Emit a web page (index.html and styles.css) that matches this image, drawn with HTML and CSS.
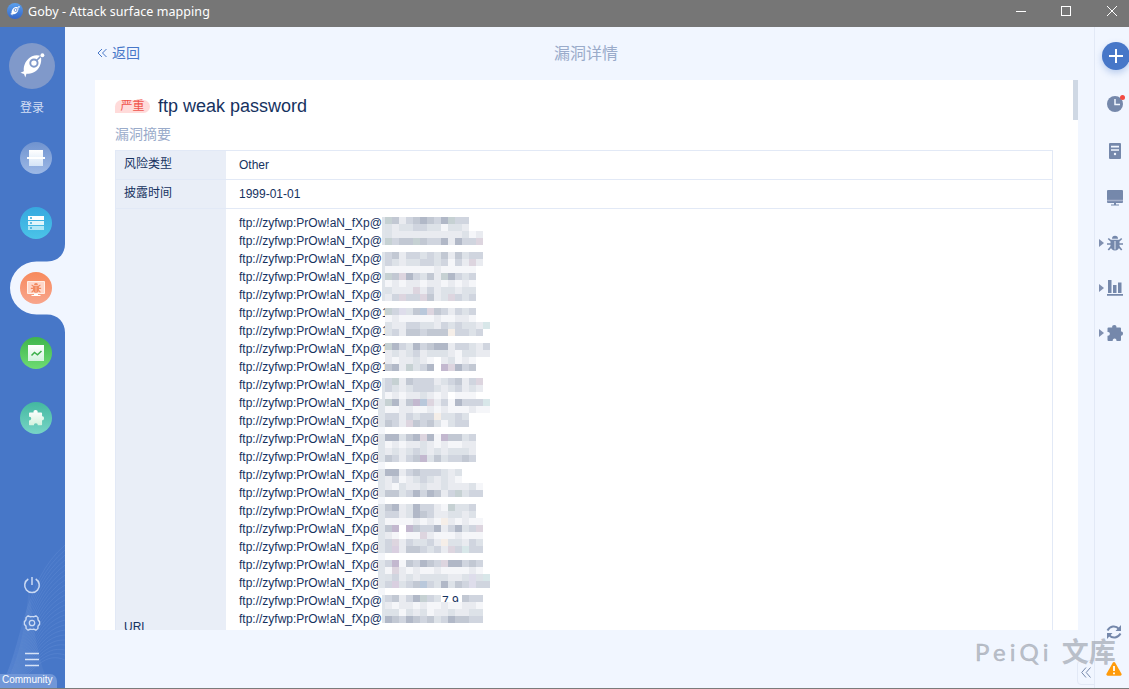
FILE: index.html
```html
<!DOCTYPE html>
<html lang="zh-CN">
<head>
<meta charset="utf-8">
<title>Goby - Attack surface mapping</title>
<link rel="stylesheet" href="styles.css">
</head>
<body>
<svg width="0" height="0" class="defs" aria-hidden="true">
  <defs>
    <linearGradient id="g-gray" x2="0" y2="1"><stop stop-color="#7093cf"/><stop offset="1" stop-color="#9db9e6"/></linearGradient>
    <linearGradient id="g-cyan" x2="0" y2="1"><stop stop-color="#37a8df"/><stop offset="1" stop-color="#4bc4e8"/></linearGradient>
    <linearGradient id="g-orange" x2="0" y2="1"><stop stop-color="#f78a5d"/><stop offset="1" stop-color="#f8a58c"/></linearGradient>
    <linearGradient id="g-green" x2="0" y2="1"><stop stop-color="#3fb54c"/><stop offset="1" stop-color="#6edc73"/></linearGradient>
    <linearGradient id="g-teal" x2="0" y2="1"><stop stop-color="#43b8a0"/><stop offset="1" stop-color="#78d5c6"/></linearGradient>
    <linearGradient id="g-sheet" x2="0" y2="1"><stop stop-color="#fff"/><stop offset="1" stop-color="#d4e4f7"/></linearGradient>
    <linearGradient id="g-mint" x2="0" y2="1"><stop stop-color="#fff"/><stop offset="1" stop-color="#d2f2dd"/></linearGradient>
    <linearGradient id="g-logo" x2="0" y2="1"><stop stop-color="#5ba0ec"/><stop offset="1" stop-color="#3466c9"/></linearGradient>
    <symbol id="rocket" viewBox="0 0 26 26">
      <path d="M.5 20.500l3.500-1.500c-.8-6 2.500-12.500 8.500-15.500 3.500-1.600 6.500-1.500 9-.3 1 3.500.8 7-1 10.500-3 6-8.500 8-13.800 8l-1.200 3.800-1.300-3.600z" fill="#fff"/>
      <circle cx="14.500" cy="10.500" r="3.800" fill="none" stroke="var(--ring)" stroke-width="2"/>
      <path d="M17 8l4.500-4.500" stroke="var(--ring)" stroke-width="1.600"/>
      <circle cx="23.300" cy="2.300" r="2" fill="#fff"/>
    </symbol>
    <symbol id="puzzle" viewBox="0 0 16 16">
      <path d="M1.500 2.500h3.700C4.900.7 6 0 7.300 0s2.500.8 2.100 2.500H13a1 1 0 0 1 1 1v3c1.300-.3 2 .7 2 2s-.8 2.400-2 2.100V15a1 1 0 0 1-1 1H9.500c.2-1.500-.6-2.400-1.900-2.400S5.500 14.500 5.700 16H1.500a1 1 0 0 1-1-1v-4.300c1.500.2 2.300-.6 2.300-1.900S2 6.700.5 7V3.500a1 1 0 0 1 1-1z"/>
    </symbol>
    <symbol id="bug" viewBox="0 0 16 16">
      <path d="M5 3.700a3 3 0 0 1 6 0z" fill="currentColor"/>
      <path d="M3.500 4.800h9v6.200a4.500 4.600 0 0 1-9 0z" fill="currentColor"/>
      <path d="M4 6L1.300 3.500M12 6l2.700-2.500M4 9H0M12 9h4M4.300 11.500L1.300 15M11.700 11.500l3 3.500" fill="none" stroke="currentColor" stroke-width="1.700"/>
      <path d="M8 6v8.500" stroke="var(--line)" stroke-width=".9"/>
    </symbol>
  </defs>
</svg>

<div class="window">
  <header class="titlebar">
    <svg class="app-logo" width="16" height="16"><circle cx="8" cy="8" r="8" fill="url(#g-logo)"/><use href="#rocket" x="3" y="3" width="10" height="10"/></svg>
    <span class="app-name">Goby - Attack surface mapping</span>
    <svg class="window-buttons" width="104" height="12" fill="none" stroke="#fff">
      <path d="M1 6.500h10" /><rect x="46.500" y="1.500" width="9" height="9"/><path d="M92 1l10 10M102 1L92 11"/>
    </svg>
  </header>

  <div class="main">
    <nav class="sidebar">
      <svg class="sidebar-shape" width="65" height="661">
        <path fill="#4777c8" d="M0 0h65v217c0 10-7 17.500-18 17.500H36.500a26.500 26.500 0 0 0 0 53H47c11 0 18 8 18 18V661H0z"/>
        <g id="waves" fill="none" stroke="#8fb2ea" stroke-opacity=".22" stroke-width=".7"></g>
        <path d="M4 661C20 630 25 600 29 560c4 40 10 80 22 101z" fill="#fff" fill-opacity=".04"/>
      </svg>
      <div class="account">
        <svg width="46" height="46"><circle cx="23" cy="23" r="23" fill="#8099ca"/><use href="#rocket" x="11" y="10" width="25" height="25"/></svg>
        <span class="login">登录</span>
      </div>
      <div class="menu">
        <svg width="32" height="32"><circle cx="16" cy="16" r="16" fill="url(#g-gray)"/><path d="M9 8h14v16H9z" fill="url(#g-sheet)"/><path d="M7 15h18v2H7z" fill="#fff"/></svg>
        <svg width="32" height="32"><circle cx="16" cy="16" r="16" fill="url(#g-cyan)"/><path d="M8 9h16v4H8z" fill="#fff"/><path d="M8 14h16v4H8z" fill="#e0f5fb"/><path d="M8 19h16v4H8z" fill="#b0e7f7"/><path d="M10 11h2M10 16h2M10 21h2" stroke="#38a9d8" stroke-width="1.500"/></svg>
        <svg width="32" height="32" class="bug-on"><circle cx="16" cy="16" r="16" fill="url(#g-orange)"/><path d="M7.500 9.500h17v12h-17z" fill="#ffd7c9" stroke="#fff0e8"/><path d="M14 22h4v1h2.500v1h-9v-1H14z" fill="#fff"/><use href="#bug" x="10.500" y="10.500" width="11" height="10.500"/></svg>
        <svg width="32" height="32"><circle cx="16" cy="16" r="16" fill="url(#g-green)"/><path d="M8 8h16v16H8z" fill="url(#g-mint)"/><path d="M11.500 18.500l3-3 3 2.300 4-3.800" fill="none" stroke="#3caf4a" stroke-width="1.500"/></svg>
        <svg width="32" height="32"><circle cx="16" cy="16" r="16" fill="url(#g-teal)"/><use href="#puzzle" x="8.500" y="8" width="15.500" height="15.500" fill="url(#g-mint)"/></svg>
      </div>
      <div class="tools">
        <svg width="18" height="18" fill="none" stroke="#cbdaf3" stroke-width="1.500"><path d="M5.300 3A7.300 7.300 0 1 0 12.700 3M9 1v8"/></svg>
        <svg width="18" height="18" fill="none" stroke="#cbdaf3" stroke-width="1.300"><path d="M5 1.800c1.500 1.300 2.300 1.300 4 .7 1.700.6 2.500.6 4-.7l2 1.800c-.6 2-.3 2.700 1.600 4v2.800c-1.900 1.300-2.200 2-1.600 4l-2 1.800c-1.500-1.300-2.300-1.300-4-.7-1.700-.6-2.500-.6-4 .7l-2-1.800c.6-2 .3-2.700-1.600-4V7.600c1.900-1.300 2.200-2 1.600-4z"/><circle cx="9" cy="9" r="2.700"/></svg>
        <svg width="18" height="18" stroke="#d6e2f6" stroke-width="1.300"><path d="M2 1.500h14M2 7.500h14M2 13.500h14"/></svg>
      </div>
      <span class="edition">Community</span>
    </nav>

    <main class="content">
      <div class="page-head">
        <a class="back"><svg width="10" height="10" fill="none" stroke="#4777c8"><path d="M5 1L1 5l4 4M9.500 1l-4 4 4 4"/></svg>返回</a>
        <h1 class="page-title">漏洞详情</h1>
      </div>
      <section class="card">
        <div class="scroll-thumb"></div>
        <div class="vuln-head"><span class="level">严重</span><h2 class="vuln-name">ftp weak password</h2></div>
        <h3 class="section-name">漏洞摘要</h3>
        <div class="details">
          <div class="key">风险类型</div><div class="value">Other</div>
          <div class="key">披露时间</div><div class="value">1999-01-01</div>
          <div class="key key-url">URL</div><div class="value value-urls" id="urls"></div>
        </div>
        <svg class="mosaic" id="mosaic" width="115" height="413"></svg>
      </section>
    </main>

    <aside class="rail">
      <button class="add"><svg width="14" height="14" stroke="#fff" stroke-width="2"><path d="M7 0v14M0 7h14"/></svg></button>
      <div class="rail-icons">
        <svg width="20" height="18"><circle cx="9" cy="10" r="8" fill="#7588ab"/><path d="M9 5v5.500h5" fill="none" stroke="#f1f6ff" stroke-width="1.500"/><circle cx="16.500" cy="3.500" r="2.500" fill="#f24a42"/></svg>
        <svg width="20" height="18"><rect x="3" y="1" width="12" height="16" rx="1" fill="#7588ab"/><path d="M5 4.700h8M5 8h8" stroke="#f1f6ff" stroke-width="1.700"/><circle cx="9" cy="12" r="1.200" fill="#f1f6ff"/></svg>
        <svg width="20" height="18" fill="#7588ab"><rect x="1" y="1" width="16" height="13" rx="1"/><path d="M1 11.500h16" stroke="#a8b3cc" stroke-width="1.500"/><path d="M8 14h2v1.500h3v1H5v-1h3z"/></svg>
        <svg width="20" height="18" class="bug-off"><use href="#bug" x="1" y="1" width="16" height="16"/></svg>
        <svg width="20" height="18" fill="#7588ab"><path d="M2 1h3.500v13H2zM7 6h3.500v8H7zM12 3.500h3.500V14H12zM1 15h16v1.700H1z"/></svg>
        <svg width="20" height="18" fill="#7588ab"><use href="#puzzle" x="1" y="1" width="16" height="16"/></svg>
      </div>
      <svg class="arrows" width="5" height="98" fill="#8090b0"><path d="M0 0l5 4-5 4zM0 45l5 4-5 4zM0 90l5 4-5 4z"/></svg>
      <div class="rail-foot">
        <svg width="16" height="16" fill="none" stroke="#7588ab" stroke-width="2"><path d="M1.500 6.500C4 2 9.500 1 13 5M14.500 9.500C12 14 6.500 15 3 11"/><path d="M15 1v6H9.500zM1 15V9h5.500z" fill="#7588ab" stroke="none"/></svg>
        <svg width="16" height="14"><path d="M6.800.8a1.400 1.400 0 0 1 2.400 0l6.300 11a1.400 1.400 0 0 1-1.200 2H1.700a1.400 1.400 0 0 1-1.200-2z" fill="#ff9b0a"/><path d="M8 4v5M8 10.500v1.700" stroke="#fff" stroke-width="1.800"/></svg>
      </div>
      <div class="collapse"><svg width="10" height="11" fill="none" stroke="#7588ab"><path d="M5 .5l-4.300 5 4.300 5M9.500.5l-4.300 5 4.300 5"/></svg></div>
    </aside>
  </div>
  <div class="watermark"><span class="mark-latin">PeiQi</span><span class="mark-cjk">文库</span></div>
</div>
<script src="script.js"></script>
</body>
</html>
```
FILE: styles.css
```css
* { box-sizing: border-box; }
body { margin: 0; overflow: hidden; font-family: "Liberation Sans", "Noto Sans CJK SC", sans-serif; color: #16325f; }
svg { display: block; flex: none; }
h1, h2, h3 { margin: 0; font-weight: 400; }
.defs { position: absolute; }
.window { position: relative; width: 1129px; height: 689px; display: flex; flex-direction: column; background: #f1f6ff; border-bottom: 1px solid #7b7b7b; overflow: hidden; }

.titlebar { height: 27px; flex: none; display: flex; align-items: center; padding: 0 10px 5px 7px; background: #767676; color: #fff; }
.app-logo { --ring: #4777c8; }
.app-name { margin-left: 5px; font: 12.5px/20px "Noto Sans", sans-serif; letter-spacing: .06px; padding-top: 2px; white-space: nowrap; }
.window-buttons { margin-left: auto; }

.main { flex: 1; min-height: 0; display: flex; }
.sidebar { position: relative; width: 65px; flex: none; display: flex; flex-direction: column; }
.sidebar-shape { position: absolute; left: 0; top: 0; }
.account { position: relative; padding: 16px 0 0 9px; height: 115px; --ring: #8099ca; }
.login { display: block; width: 46px; margin-top: 9px; font-size: 12px; line-height: 20px; text-align: center; color: #d3dff4; }
.menu { position: relative; display: flex; flex-direction: column; gap: 33px; padding-left: 20px; }
.bug-on { color: #f2895f; --line: #ffd7c9; }
.bug-off { color: #7588ab; --line: #f1f6ff; }
.tools { position: relative; display: flex; flex-direction: column; gap: 20px; margin-top: 142px; padding-left: 23px; }
.edition { position: absolute; left: 0; bottom: 0; width: 57px; height: 14px; padding-left: 2px; border-radius: 0 7px 0 0; background: #7197d8; color: #fff; font-size: 10px; line-height: 12px; }

.content { flex: 1; padding: 0 16px 0 30px; }
.page-head { position: relative; height: 53px; display: flex; align-items: center; justify-content: center; padding-right: 1px; }
.back { position: absolute; left: 2px; top: 16px; display: flex; align-items: center; gap: 5px; font-size: 14px; line-height: 20px; color: #4777c8; }
.page-title { font-size: 16px; line-height: 24px; color: #9aabca; }
.card { position: relative; height: 550px; padding: 14px 25px 0 20px; background: #fff; overflow: hidden; }
.scroll-thumb { position: absolute; right: 0; top: 0; width: 5px; height: 40px; background: #cfd8e4; }
.vuln-head { display: flex; align-items: center; gap: 8px; height: 24px; }
.level { width: 35px; height: 13px; margin-top: 1px; border-radius: 7px 7px 7px 0; background: #ffdbda; color: #f0544c; font-size: 12px; line-height: 12px; text-align: center; }
.vuln-name { font-size: 18px; line-height: 24px; }
.section-name { margin-top: 6px; height: 26px; font-size: 14px; line-height: 20px; color: #9aabca; }
.details { display: grid; grid-template-columns: 110px 1fr; grid-template-rows: 29px 29px 837px; border: 1px solid #e2e9f6; font-size: 12px; }
.key { padding-left: 8px; background: #e9eef7; line-height: 26px; border-bottom: 1px solid #e2e9f6; }
.value { padding-left: 13px; line-height: 28px; border-bottom: 1px solid #e2e9f6; }
.key-url { display: flex; align-items: center; }
.value-urls { padding-top: 5px; line-height: 18px; }
.mosaic { position: absolute; left: 282px; top: 137px; }

.rail { position: relative; width: 35px; flex: none; border-left: 1px solid #e2e9f6; }
.add { display: flex; align-items: center; justify-content: center; width: 28px; height: 28px; margin: 15px 0 0 7px; padding: 0; border: 0; border-radius: 50%; background: #4777c8; box-shadow: 0 3px 7px #4777c855; }
.rail-icons { display: flex; flex-direction: column; padding: 24px 0 0 11px; gap: 27px; }
.rail-icons svg:nth-child(1) { margin-bottom: 3px; }
.rail-icons svg:nth-child(2) { margin-bottom: 2px; }
.arrows { position: absolute; left: 4px; top: 212px; }
.rail-foot { position: absolute; left: 11px; bottom: 12px; display: flex; flex-direction: column; gap: 22px; }
.collapse { position: absolute; right: 34px; bottom: 3px; width: 18px; height: 25px; display: flex; align-items: center; justify-content: center; border: 1px solid #e2e9f6; border-radius: 4px 0 0 4px; }
.watermark { position: absolute; left: 975px; top: 632px; display: flex; align-items: center; gap: 9px; color: #9da3aeaa; line-height: 36px; white-space: nowrap; }
.mark-latin { font: 24px/36px Lato, sans-serif; letter-spacing: 4.200px; padding-top: 2px; -webkit-text-stroke: .5px; }
.mark-cjk { font: 700 27px/36px "Noto Sans CJK SC", sans-serif; }
```
FILE: script.js
```js
const NS = 'http://www.w3.org/2000/svg';
function add(parent, tag, attrs) {
  const el = document.createElementNS(NS, tag);
  for (const k in attrs) el.setAttribute(k, attrs[k]);
  parent.appendChild(el);
  return el;
}

// URL list; the host part lies under the mosaic
const tails = { 5: '1', 6: '1', 7: '1', 8: '1', 22: '2' };
const urls = document.getElementById('urls');
for (let i = 0; i < 23; i++) {
  const line = document.createElement('div');
  line.textContent = 'ftp://zyfwp:PrOw!aN_fXp@' + (tails[i] || '');
  urls.appendChild(line);
}

// Mosaic rows of 7px cells, one tone per character
const tones = { 1: '#f5f6f9', 2: '#e9ebf0', 3: '#dde2e8', 4: '#d0d5df', 5: '#c2c8d3', 6: '#b1b8c7',
  g: '#c6d1d3', p: '#ddd5df', P: '#d9cfe0', v: '#c3b8cf', b: '#b9c8db', o: '#f5eee8', t: '#d8e7e9', L: '#deddeb' };
const rows = ['g52456546g44', '323344331332', '32222222222312', 'g455g54462644p', '',
  '45244343525344', '432334434142p2', '1111111211111', 'g5p64352g6434', '1212212212121', '3222p24233233', '24p44p523p434', '',
  'g4L35bp542434', '1211111211221', '32244332434332t', '342554555o4434', '',
  'g64364566244324', '232342333213322', '2122321.23121', '562g346.vp645', '',
  '4g25444234524p', '43234443234232', '121223212.111', 'g625vbp2416444t', '112211212111211', '4424344o3343', '542p54531344', '',
  '66356p61v5534', '1212232121122', '2323432323332', '54245v3534454', '',
  '66245444323', '24123432321', '21322322322231', '5534646524g344', '',
  '562364421g334', '4423654223323', '11112121o21211', '5v.v544624634p', '21.11p21112111', '4p243342o33243', '4P2554342p4t44', '',
  '4v154654p66454', '1p212112111121', '342323333223L3t', '4P345b436354L44', '',
  '45246g43...544', '21221211211221', '33132312232233', '65465453465544'];
const mosaic = document.getElementById('mosaic');
add(mosaic, 'text', { x: 65, y: 388, 'font-size': 12, fill: '#16325f' }).textContent = '7.9.';
rows.forEach((row, r) => {
  [...row].forEach((c, i) => {
    if (tones[c]) add(mosaic, 'rect', { x: 8 + i * 7, y: r * 7, width: 7, height: 7, fill: tones[c] });
  });
  // narrow column of cells that covers the end of the "@"
  const late = r > 25 && r < 54;
  const x = late ? 1 : 5;
  if (row ? (r < 12 || r > 22) : late) {
    add(mosaic, 'rect', { x, y: r * 7, width: 8 - x, height: 7, fill: row ? '#dfe4ea' : '#f4f6fa' });
  }
});

// Decorative wave lines at the foot of the sidebar
const waves = document.getElementById('waves');
for (let i = 0; i < 24; i++) {
  add(waves, 'path', { d: `M${i * .6} 661C${24 + i * .4} ${620 + i} ${22 + i} ${555 + i * 3} 65 ${518 + i * 5}` });
}
```
